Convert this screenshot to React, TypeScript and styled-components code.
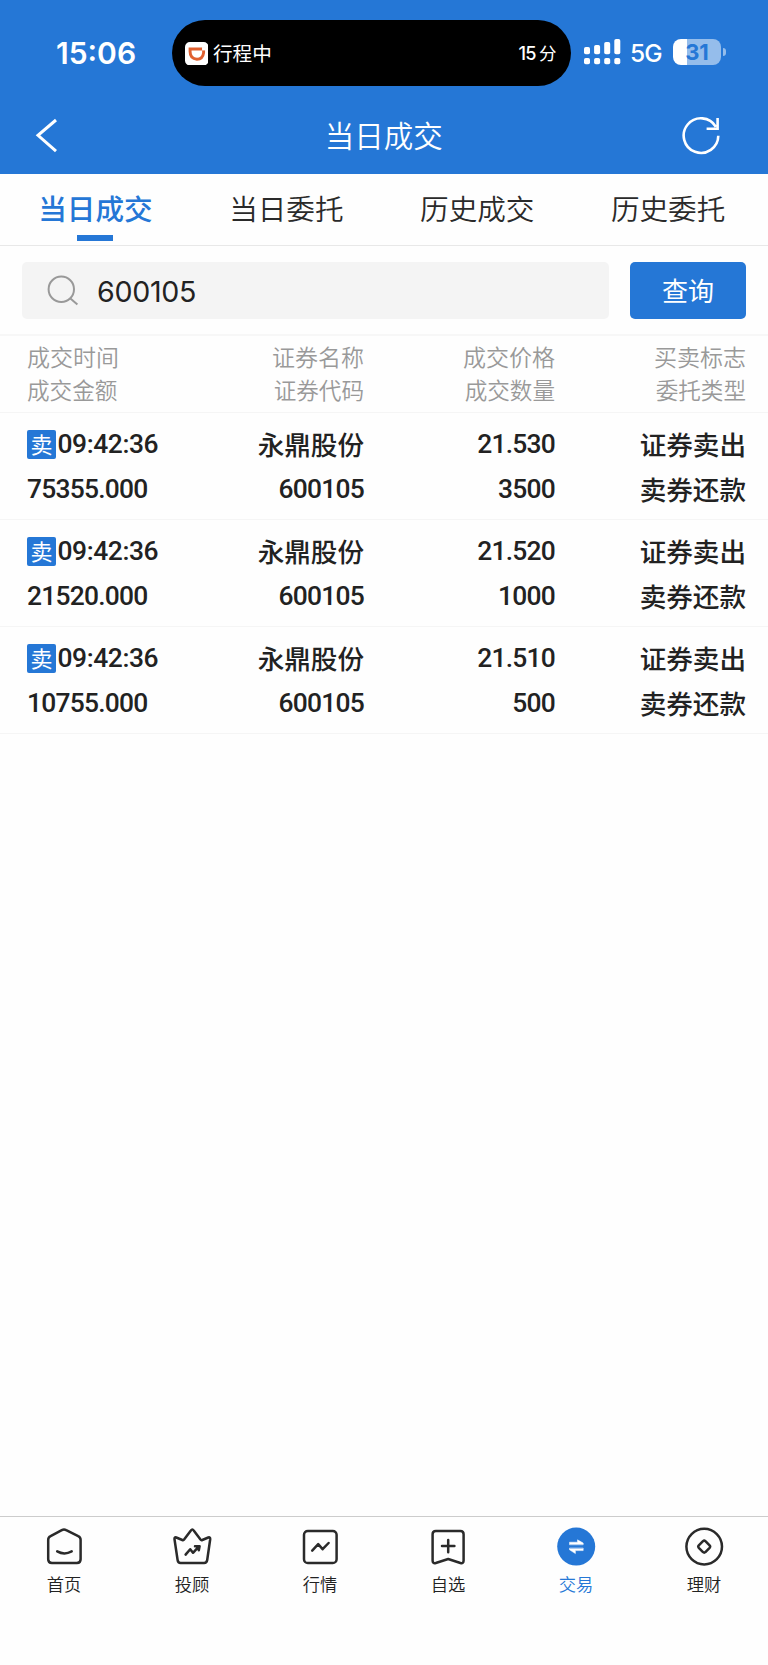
import styled, { createGlobalStyle } from 'styled-components';
import type { ReactNode } from 'react';

const BLUE = '#2577d6';
const CJK = "'Noto Sans CJK SC', sans-serif";
const CJK_THIN = "'Noto Sans CJK SC DemiLight', 'Noto Sans CJK SC', sans-serif";

const TABS = ['当日成交', '当日委托', '历史成交', '历史委托'];

const HEADINGS = [
  ['成交时间', '成交金额'],
  ['证券名称', '证券代码'],
  ['成交价格', '成交数量'],
  ['买卖标志', '委托类型'],
];

const DEALS = [
  { id: 1, time: '09:42:36', amount: '75355.000', price: '21.530', count: '3500' },
  { id: 2, time: '09:42:36', amount: '21520.000', price: '21.520', count: '1000' },
  { id: 3, time: '09:42:36', amount: '10755.000', price: '21.510', count: '500' },
];

const NAV_ITEMS: { label: string; active?: boolean; icon: ReactNode }[] = [
  {
    label: '首页',
    icon: (
      <>
        <path d="M17.8 3.1Q20 1.9 22.2 3.1L34.2 9.1Q36.6 10.2 36.6 12.8V32.3Q36.6 36 32.9 36H7.9Q4.2 36 4.2 32.3V12.8Q4.2 10.2 6.6 9.1Z" />
        <path d="M13.2 24.4Q20.4 28.4 27.7 24.4" />
      </>
    ),
  },
  {
    label: '投顾',
    icon: (
      <>
        <path d="M18.9 3.4Q20.3 1.4 21.7 3.4L28.5 12.6Q29.2 13.5 30.3 13L36.3 10.5Q38.4 9.9 38.2 12.2L35.2 33Q34.7 36 32.1 36H8.6Q6 36 5.6 33L2.5 12.2Q2.2 9.9 4.3 10.5L10.3 13Q11.5 13.5 12.1 12.6Z" />
        <path d="M13.6 27.6L18.2 22.2L21 25.8L26.7 19.6M23 19.2H27.6L26.8 23.2" />
      </>
    ),
  },
  {
    label: '行情',
    icon: (
      <>
        <rect x="4" y="3.9" width="32.6" height="32.1" rx="3.8" />
        <path d="M12.2 23.6L18.2 17.2L22.6 22.2L28.6 16" />
      </>
    ),
  },
  {
    label: '自选',
    icon: (
      <>
        <path d="M7.8 4H32.4Q35.6 4 35.6 7.3V33.6Q35.6 36.8 32.4 36L20.2 32L7.8 36Q4.6 36.8 4.6 33.6V7.3Q4.6 4 7.8 4Z" />
        <path d="M20.2 13V25.2M14 19.1H26.4" />
      </>
    ),
  },
  {
    label: '交易',
    active: true,
    icon: (
      <>
        <circle cx="20.2" cy="19.6" r="19" fill={BLUE} stroke="none" />
        <path d="M13.5 17.4V15.2H21.5V12.8L27.2 16V17.4ZM27.2 21.4V23.6H19.4V26.6L13.5 22.8V21.4Z" fill="#fff" stroke="#fff" strokeWidth="0.5" />
      </>
    ),
  },
  {
    label: '理财',
    icon: (
      <>
        <circle cx="20.2" cy="19.6" r="17.8" />
        <path d="M19 14.1Q20.2 13.1 21.4 14.1L25.6 18.4Q26.7 19.6 25.6 20.8L21.4 25.1Q20.2 26.1 19 25.1L14.8 20.8Q13.7 19.6 14.8 18.4Z" />
      </>
    ),
  },
];

export default function App() {
  return (
    <>
      <GlobalStyle />
      <Page>
        <StatusBar>
          <Clock>15:06</Clock>
          <Island>
            <TripIcon viewBox="0 0 24 24">
              <rect width="24" height="24" rx="5" fill="#fff" />
              <path d="M5.2 7.2H19V10.8Q18.2 17.6 12.2 17.6Q5.2 17.2 5.2 9.8Z" fill="none" stroke="#e0602f" strokeWidth="3" />
              <path d="M17.4 5.2V8.6H21V5.2Z" fill="#fff" />
            </TripIcon>
            <TripState>行程中</TripState>
            <TripTime>
              15<TripUnit>分</TripUnit>
            </TripTime>
          </Island>
          <Signal viewBox="0 0 37 26">
            {[8, 6, 3, 0].map((top, i) => (
              <g key={top} fill="#fff">
                <rect x={i * 10.1} y={top} width="6" height={15.3 - top} rx="1.8" />
                <rect x={i * 10.1} y="19" width="6" height="6.3" rx="1.8" />
              </g>
            ))}
          </Signal>
          <Network>5G</Network>
          <Battery>31</Battery>
          <BatteryTip />
        </StatusBar>

        <TitleBar>
          <TitleIcon viewBox="0 0 40 40">
            <path d="M31 4L13 19.3L31 35.2" strokeWidth="3" />
          </TitleIcon>
          <Title>当日成交</Title>
          <TitleIcon viewBox="0 0 40 40">
            <path d="M37.3 19.8A17.3 17.3 0 1 1 34.9 10.8M36.6 2V12.7H25.6" strokeWidth="2.6" />
          </TitleIcon>
        </TitleBar>

        <Tabs>
          {TABS.map((tab, i) => (
            <Tab key={tab} $active={i === 0}>
              {tab}
            </Tab>
          ))}
        </Tabs>

        <SearchBar>
          <SearchField>
            <SearchIcon viewBox="0 0 32 32">
              <circle cx="14.3" cy="14.3" r="12.7" />
              <path d="M23.4 23.4L30.4 29.4" />
            </SearchIcon>
            600105
          </SearchField>
          <QueryButton>查询</QueryButton>
        </SearchBar>

        <HeadRow>
          {HEADINGS.map(([top, bottom]) => (
            <HeadCell key={top}>
              <span>{top}</span>
              <HeadSub>{bottom}</HeadSub>
            </HeadCell>
          ))}
        </HeadRow>

        {DEALS.map((deal) => (
          <DealRow key={deal.id}>
            <Cell>
              <Figure $tracking={-0.4}>
                <SellTag>卖</SellTag>
                {deal.time}
              </Figure>
              <Figure>{deal.amount}</Figure>
            </Cell>
            <Cell>
              <Line>永鼎股份</Line>
              <Figure>600105</Figure>
            </Cell>
            <Cell>
              <Figure>{deal.price}</Figure>
              <Figure>{deal.count}</Figure>
            </Cell>
            <Cell>
              <Line>证券卖出</Line>
              <Line>卖券还款</Line>
            </Cell>
          </DealRow>
        ))}

        <BottomNav>
          {NAV_ITEMS.map((item) => (
            <NavItem key={item.label} $active={item.active}>
              <NavIcon viewBox="0 0 40 40">{item.icon}</NavIcon>
              {item.label}
            </NavItem>
          ))}
        </BottomNav>
      </Page>
    </>
  );
}

const GlobalStyle = createGlobalStyle`
  * {
    box-sizing: border-box;
  }

  body {
    margin: 0;
    background: #fefefe;
  }
`;

const Page = styled.div`
  width: 768px;
  height: 1665px;
  display: flex;
  flex-direction: column;
  overflow: hidden;
  background: #fefefe;
  color: #222;
  font-family: ${CJK};
`;

const StatusBar = styled.div`
  height: 106px;
  flex: none;
  display: flex;
  align-items: center;
  background: ${BLUE};
  color: #fff;
  font-family: Inter, ${CJK};
`;

const Clock = styled.div`
  width: 172px;
  padding-left: 56px;
  font-size: 30px;
  font-weight: 600;
`;

const Island = styled.div`
  width: 399px;
  height: 66px;
  display: flex;
  align-items: center;
  padding: 0 14.5px 0 12.5px;
  border-radius: 33px;
  background: #000;
`;

const TripIcon = styled.svg`
  width: 23.5px;
  height: 23.5px;
  margin-top: 1px;
`;

const TripState = styled.div`
  margin-left: 5px;
  font: 400 19.6px/28px ${CJK};
`;

const TripTime = styled.div`
  display: flex;
  align-items: center;
  gap: 3px;
  margin-left: auto;
  font-size: 18.2px;
  line-height: 28px;
  font-weight: 500;
  letter-spacing: -0.6px;
`;

const TripUnit = styled.span`
  font: 400 17.5px/26px ${CJK};
  padding-bottom: 1px;
  letter-spacing: 0;
`;

const Signal = styled.svg`
  width: 37px;
  height: 26px;
  margin: 0 0 2px 13px;
`;

const Network = styled.div`
  width: 33px;
  margin-left: 9px;
  font-size: 24.5px;
  font-weight: 500;
  letter-spacing: -1px;
`;

const Battery = styled.div`
  width: 48px;
  height: 26px;
  margin: 0 0 2px 10px;
  border-radius: 8px;
  background: linear-gradient(90deg, #fff 14.5px, #95bdeb 14.5px);
  color: ${BLUE};
  font-size: 22px;
  font-weight: 700;
  line-height: 26px;
  text-align: center;
`;

const BatteryTip = styled.div`
  width: 3px;
  height: 8px;
  margin: 0 0 2px 1.5px;
  border-radius: 0 4px 4px 0;
  background: #95bdeb;
`;

const TitleBar = styled.div`
  height: 68px;
  flex: none;
  display: flex;
  justify-content: space-between;
  padding: 10px 47px 0 25px;
  background: ${BLUE};
  color: #fff;
`;

const TitleIcon = styled.svg`
  width: 40px;
  height: 40px;
  fill: none;
  stroke: currentColor;
`;

const Title = styled.h1`
  margin: 0 0 0 21.5px;
  font-family: ${CJK_THIN};
  font-size: 29.5px;
  font-weight: 350;
  line-height: 36px;
`;

const Tabs = styled.div`
  height: 72px;
  flex: none;
  display: grid;
  grid-template-columns: repeat(4, 190.9px);
  border-bottom: 1px solid #e8e8e8;
`;

const Tab = styled.div<{ $active?: boolean }>`
  display: flex;
  flex-direction: column;
  align-items: center;
  padding-top: 13px;
  color: ${({ $active }) => ($active ? BLUE : '#2a2a2a')};
  font-family: ${({ $active }) => ($active ? CJK : CJK_THIN)};
  font-size: 28.6px;
  font-weight: ${({ $active }) => ($active ? 500 : 350)};
  line-height: 42px;

  &::after {
    content: '';
    width: 36px;
    height: 6px;
    margin-top: 6px;
    background: ${({ $active }) => ($active ? BLUE : 'transparent')};
  }
`;

const SearchBar = styled.div`
  height: 90px;
  flex: none;
  display: flex;
  gap: 21px;
  padding: 16px 22px 0 21.5px;
  border-bottom: 2px solid #f7f7f7;
`;

const SearchField = styled.div`
  flex: 1;
  height: 57px;
  display: flex;
  align-items: center;
  gap: 18px;
  padding: 1px 0 0 25.5px;
  border-radius: 5px;
  background: #f4f4f4;
  font-family: Inter, sans-serif;
  font-size: 28.6px;
  letter-spacing: -0.3px;
`;

const SearchIcon = styled.svg`
  width: 32px;
  height: 32px;
  fill: none;
  stroke: #999;
  stroke-width: 2;
`;

const QueryButton = styled.button`
  width: 116px;
  height: 57px;
  padding: 0 0 2px;
  border: 0;
  border-radius: 5px;
  background: ${BLUE};
  color: #fff;
  font-family: ${CJK};
  font-size: 26px;
`;

const Row = styled.div`
  flex: none;
  display: grid;
  grid-template-columns: 1fr repeat(3, 191px);
  padding: 0 22px 0 27px;
  border-bottom: 1.5px solid #f5f5f5;
`;

const Cell = styled.div`
  display: flex;
  flex-direction: column;
  align-items: flex-end;

  &:first-child {
    align-items: flex-start;
  }
`;

const HeadRow = styled(Row)`
  height: 77px;
  padding-top: 4px;
`;

const HeadCell = styled(Cell)`
  color: #999;
  font-family: ${CJK_THIN};
  font-size: 23px;
  font-weight: 350;
  line-height: 33px;
`;

const HeadSub = styled.span`
  font-size: 22.6px;
`;

const DealRow = styled(Row)`
  height: 107px;
  padding-top: 10px;
`;

const Line = styled.div`
  height: 44.6px;
  display: flex;
  align-items: center;
  padding-bottom: 3px;
  font-family: ${CJK};
  font-size: 26.6px;
  font-weight: 500;
  line-height: 41px;
`;

const Figure = styled(Line)<{ $tracking?: number }>`
  padding-bottom: 1px;
  font-family: Roboto, sans-serif;
  font-size: 26.4px;
  letter-spacing: ${({ $tracking = -0.75 }) => $tracking}px;
`;

const SellTag = styled.span`
  width: 29px;
  height: 29px;
  margin: 0 1.5px 1px 0;
  border-radius: 2px;
  background: ${BLUE};
  color: #fff;
  font: 400 22px/26px ${CJK};
  letter-spacing: 0;
  text-align: center;
`;

const BottomNav = styled.div`
  height: 149px;
  display: grid;
  grid-template-columns: repeat(6, 128px);
  margin-top: auto;
  border-top: 1.5px solid #ccc;
`;

const NavItem = styled.div<{ $active?: boolean }>`
  display: flex;
  flex-direction: column;
  align-items: center;
  padding-top: 10px;
  color: ${({ $active }) => ($active ? BLUE : '#222')};
  font-family: ${CJK_THIN};
  font-size: 17.3px;
  font-weight: 350;
  line-height: 34px;
`;

const NavIcon = styled.svg`
  width: 40px;
  height: 40px;
  fill: none;
  stroke: #2a2a2a;
  stroke-width: 2.5;
  stroke-linecap: round;
  stroke-linejoin: round;
`;
